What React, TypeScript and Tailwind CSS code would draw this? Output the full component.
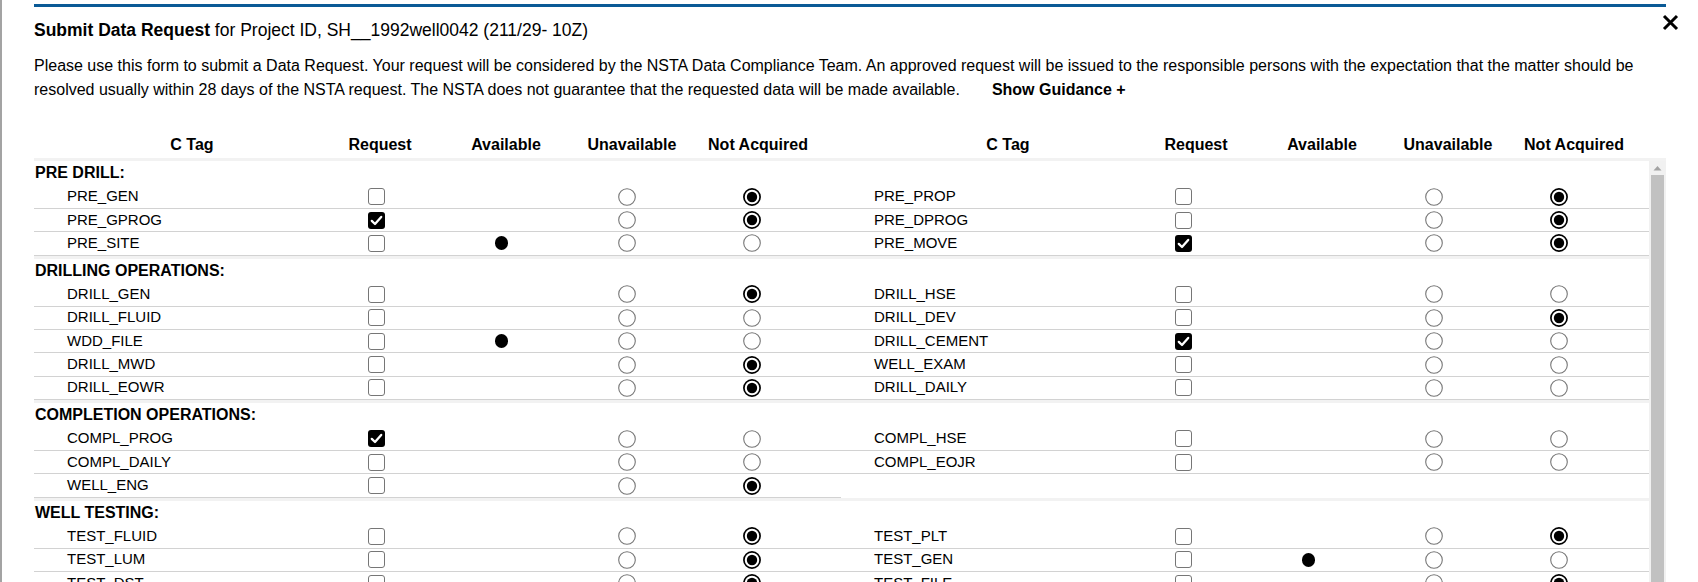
import React from "react";

type Row = [string, number, number, number, number];
type Group = { label: string; left: Row[]; right: Row[] };

const groups: Group[] = [
  {
    label: "PRE DRILL:",
    left: [
      ["PRE_GEN", 0, 0, 0, 1],
      ["PRE_GPROG", 1, 0, 0, 1],
      ["PRE_SITE", 0, 1, 0, 0],
    ],
    right: [
      ["PRE_PROP", 0, 0, 0, 1],
      ["PRE_DPROG", 0, 0, 0, 1],
      ["PRE_MOVE", 1, 0, 0, 1],
    ],
  },
  {
    label: "DRILLING OPERATIONS:",
    left: [
      ["DRILL_GEN", 0, 0, 0, 1],
      ["DRILL_FLUID", 0, 0, 0, 0],
      ["WDD_FILE", 0, 1, 0, 0],
      ["DRILL_MWD", 0, 0, 0, 1],
      ["DRILL_EOWR", 0, 0, 0, 1],
    ],
    right: [
      ["DRILL_HSE", 0, 0, 0, 0],
      ["DRILL_DEV", 0, 0, 0, 1],
      ["DRILL_CEMENT", 1, 0, 0, 0],
      ["WELL_EXAM", 0, 0, 0, 0],
      ["DRILL_DAILY", 0, 0, 0, 0],
    ],
  },
  {
    label: "COMPLETION OPERATIONS:",
    left: [
      ["COMPL_PROG", 1, 0, 0, 0],
      ["COMPL_DAILY", 0, 0, 0, 0],
      ["WELL_ENG", 0, 0, 0, 1],
    ],
    right: [
      ["COMPL_HSE", 0, 0, 0, 0],
      ["COMPL_EOJR", 0, 0, 0, 0],
    ],
  },
  {
    label: "WELL TESTING:",
    left: [
      ["TEST_FLUID", 0, 0, 0, 1],
      ["TEST_LUM", 0, 0, 0, 1],
      ["TEST_DST", 0, 0, 0, 1],
    ],
    right: [
      ["TEST_PLT", 0, 0, 0, 1],
      ["TEST_GEN", 0, 1, 0, 0],
      ["TEST_FILE", 0, 0, 0, 1],
    ],
  },
];

function Checkbox({ checked }: { checked: boolean }) {
  if (checked) {
    return (
      <div className="w-[17px] h-[17px] rounded-[3px] bg-black flex items-center justify-center">
        <svg width="17" height="17" viewBox="0 0 17 17">
          <path d="M3.8 8.9 L7 12 L13.2 4.9" fill="none" stroke="white" strokeWidth="2.3" strokeLinecap="round" strokeLinejoin="round" />
        </svg>
      </div>
    );
  }
  return <div className="w-[17px] h-[17px] rounded-[3px] border border-[#767676] bg-white" />;
}

function Radio({ checked }: { checked: boolean }) {
  return (
    <svg width="18" height="18" viewBox="0 0 18 18">
      {checked ? (
        <>
          <circle cx="9" cy="9" r="8.1" fill="white" stroke="black" strokeWidth="1.7" />
          <circle cx="9" cy="9" r="5.2" fill="black" />
        </>
      ) : (
        <circle cx="9" cy="9" r="8.3" fill="white" stroke="#767676" strokeWidth="1.1" />
      )}
    </svg>
  );
}

function DataRow({ row }: { row: Row }) {
  const [tag, req, avail, unavail, notacq] = row;
  return (
    <div className="grid grid-cols-[280px_125px_125px_125px_125px_1fr] h-[23.4px] border-b border-[#d2d2d2] items-center">
      <div className="pl-[33px] text-[15px] leading-[20px] text-black -mt-[1px]">{tag}</div>
      <div className="flex justify-center">
        <Checkbox checked={!!req} />
      </div>
      <div className="flex justify-center">
        {avail ? <div className="w-[13px] h-[14px] rounded-full bg-black" /> : null}
      </div>
      <div className="flex justify-center">
        <Radio checked={!!unavail} />
      </div>
      <div className="flex justify-center">
        <Radio checked={!!notacq} />
      </div>
      <div />
    </div>
  );
}

function HeaderHalf() {
  return (
    <div className="grid grid-cols-[283px_126px_126px_126px_126px_1fr] h-[27px] items-center text-[16px] font-bold text-black">
      <div className="pl-[33px] text-center">C Tag</div>
      <div className="text-center">Request</div>
      <div className="text-center">Available</div>
      <div className="text-center">Unavailable</div>
      <div className="text-center whitespace-nowrap">Not Acquired</div>
      <div />
    </div>
  );
}

export default function App() {
  return (
    <div
      className="relative w-[1698px] h-[582px] overflow-hidden bg-white flex text-black"
      style={{ fontFamily: '"Liberation Sans", Arial, sans-serif' }}
    >
      <div className="w-[2px] h-full bg-[#a3a3a3] shrink-0" />
      <div className="ml-[32px] w-[1632px] shrink-0 flex flex-col">
        <div className="h-[3px] mt-[4px] bg-[#0a5a96]" />
        <div className="mt-[11px] text-[17.5px] leading-[24px]">
          <span className="font-bold">Submit Data Request</span> for Project ID, SH__1992well0042 (211/29- 10Z)
        </div>
        <p className="mt-[12px] text-[16px] leading-[23.5px] whitespace-nowrap">
          Please use this form to submit a Data Request. Your request will be considered by the NSTA Data Compliance Team. An approved request will be issued to the responsible persons with the expectation that the matter should be
          <br />
          resolved usually within 28 days of the NSTA request. The NSTA does not guarantee that the requested data will be made available.
          <span className="ml-[32px] font-bold">Show Guidance +</span>
        </p>
        <div className="mt-[30px] flex border-b-[3px] border-[#f2f2f2]">
          <div className="w-[816px]">
            <HeaderHalf />
          </div>
          <div className="flex-1">
            <HeaderHalf />
          </div>
        </div>
        <div className="flex flex-1 min-h-0">
          <div className="w-[1615px]">
            {groups.map((g, gi) => (
              <div key={g.label} className={gi > 0 ? "border-t-[3px] border-[#f2f2f2]" : ""}>
                <div className="h-[24.5px] flex items-center pl-[1px] text-[16px] font-bold">{g.label}</div>
                <div className="flex items-start">
                  <div className="w-[807px]">
                    {g.left.map((r) => (
                      <DataRow key={r[0]} row={r} />
                    ))}
                  </div>
                  <div className="flex-1">
                    {g.right.map((r) => (
                      <DataRow key={r[0]} row={r} />
                    ))}
                  </div>
                </div>
              </div>
            ))}
          </div>
          <div className="w-[17px] bg-[#f1f1f1] flex flex-col items-center">
            <div className="h-[14px] w-full flex items-center justify-center">
              <svg width="9" height="6" viewBox="0 0 9 6">
                <path d="M0.5 5.5 L4.5 1 L8.5 5.5 Z" fill="#a3a3a3" />
              </svg>
            </div>
            <div className="w-[13px] flex-1 bg-[#c1c1c1]" />
          </div>
        </div>
      </div>
      <div className="absolute left-[1662px] top-[14px] w-[17px] h-[17px]">
        <svg width="17" height="17" viewBox="0 0 17 17">
          <path d="M2 2 L15 15 M15 2 L2 15" stroke="black" strokeWidth="3" />
        </svg>
      </div>
    </div>
  );
}
